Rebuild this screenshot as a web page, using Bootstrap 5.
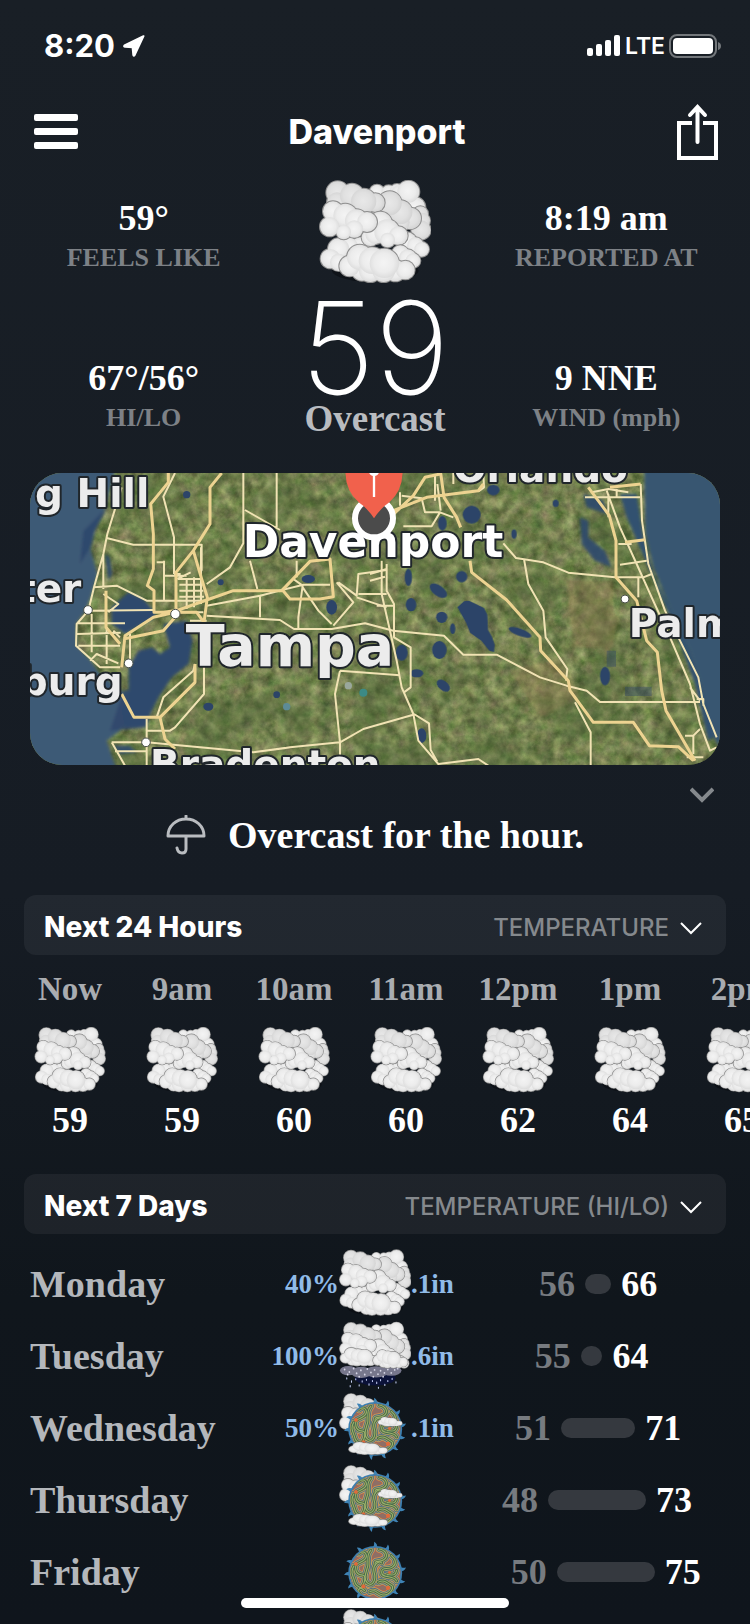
<!DOCTYPE html>
<html lang="en">
<head>
<meta charset="utf-8">
<meta name="viewport" content="width=device-width, initial-scale=1">
<title>Davenport weather</title>
<link rel="stylesheet" href="https://cdn.jsdelivr.net/npm/bootstrap@5.3.0/dist/css/bootstrap.min.css">
<style>
  :root { --ui: Inter, "Liberation Sans", sans-serif; --text: Palatino, "Liberation Serif", serif; }
  body { background: linear-gradient(#191f26, #161c24 55%, #10161c 80%, #0f151c); color: #fff; font-family: var(--text); font-weight: 700; }
  svg { display: block; }
  .screen { height: 100vh; overflow: hidden; }
  .statusbar { height: 88px; padding: 3px 28px 0 44px; font: 700 31px/36px var(--ui); }
  .lte { font-size: 23px; font-weight: 600; }
  .titlebar { height: 88px; padding: 0 32px; }
  .titlebar h1 { font: 800 34px/40px var(--ui); }
  .plain { background: none; border: 0; padding: 0; color: inherit; }
  .current { padding: 0 28px; }
  .side { padding-top: 21px; gap: 80px; }
  .value { font-size: 36px; line-height: 42px; }
  .caption { font-size: 26px; line-height: 38px; color: #7d8186; }
  .bigtemp { font: 200 128px/104px var(--ui); margin-top: 12px; }
  .summary { font-size: 37px; line-height: 38px; color: #b9bcc0; }
  .map { margin: 35px 30px 0; border-radius: 32px; overflow: hidden; }
  .map text { font: 700 117px "DejaVu Sans", sans-serif; fill: #ececec; stroke: #20262b; stroke-width: 12px; paint-order: stroke; stroke-linejoin: round; }
  .map .here { font-size: 132px; fill: #fff; }
  .map .city { font-size: 171px; }
  .more { height: 28px; margin: 16px 36px 6px; }
  .hourly-note { font-size: 38px; line-height: 40px; gap: 22px; margin-bottom: 40px; }
  .panel { height: 60px; margin: 0 24px; padding: 3px 24px 0 20px; border-radius: 12px; background: rgba(255,255,255,.055); }
  .panel h2 { font: 800 28px/32px var(--ui); }
  .panel button { font: 500 24px/32px var(--ui); color: #85898d; gap: 11px; padding-top: 2px; }
  .hours { margin: 14px 0 32px; padding: 0 0 0 14px; overflow: hidden; }
  .hours li { flex: 0 0 112px; }
  .hour { font-size: 33px; line-height: 40px; color: #a9acb0; margin-bottom: 18px; }
  .temp { font-size: 36px; line-height: 44px; margin-top: 5px; }
  .days { margin: 13px 30px 0; padding: 0; }
  .day { display: grid; grid-template-columns: 1fr 72px 1fr; height: 72px; align-items: center; }
  .day > div { padding-top: 2px; }
  .dayname { font-size: 38px; line-height: 44px; color: #b4b7bb; }
  .precip { font-size: 27px; line-height: 36px; color: #90bbe8; }
  .amount { flex: 0 0 91px; }
  .range { font-size: 36px; line-height: 44px; gap: 10px; }
  .range > * { flex-shrink: 0; }
  .lo { color: #777b80; }
  .bar { height: 20px; border-radius: 10px; background: #35393f; }
  .home { position: fixed; left: 50%; bottom: 16px; width: 268px; height: 10px; margin-left: -134px; border-radius: 5px; background: #fff; }
</style>
</head>
<body>

<svg width="0" height="0" class="position-absolute" aria-hidden="true">
  <defs>
    <radialGradient id="puff" cx=".48" cy=".48" r=".55"><stop offset="0" stop-color="#f4f4f4"/><stop offset=".6" stop-color="#ececec"/><stop offset="1" stop-color="#dadada"/></radialGradient>
    <radialGradient id="puffBack" cx=".48" cy=".48" r=".55"><stop offset="0" stop-color="#e8e8e8"/><stop offset=".6" stop-color="#e0e0e0"/><stop offset="1" stop-color="#d2d2d2"/></radialGradient>
    <g id="k1"><circle cx="230" cy="64" r="22"/><circle cx="265" cy="66" r="22"/><circle cx="290" cy="62" r="22"/><circle cx="345" cy="110" r="30"/><circle cx="300" cy="72" r="30"/><circle cx="324" cy="63" r="33"/></g>
    <g id="k2"><circle cx="360" cy="130" r="23"/><circle cx="365" cy="150" r="24"/><circle cx="362" cy="178" r="29"/></g>
    <g id="k3"><circle cx="112" cy="66" r="34"/><circle cx="110" cy="95" r="30"/><circle cx="155" cy="75" r="36"/><circle cx="225" cy="96" r="28"/><circle cx="190" cy="92" r="38"/></g>
    <g id="k4"><circle cx="250" cy="120" r="34"/><circle cx="330" cy="143" r="32"/><circle cx="300" cy="155" r="28"/><circle cx="300" cy="125" r="36"/><circle cx="268" cy="98" r="36"/></g>
    <g id="k5"><circle cx="320" cy="215" r="30"/><circle cx="345" cy="225" r="25"/><circle cx="364" cy="236" r="22"/></g>
    <g id="k6"><circle cx="180" cy="230" r="30"/><circle cx="145" cy="228" r="28"/><circle cx="115" cy="235" r="32"/><circle cx="90" cy="264" r="29"/><circle cx="115" cy="275" r="26"/></g>
    <g id="k7"><circle cx="210" cy="200" r="26"/><circle cx="240" cy="158" r="35"/><circle cx="225" cy="190" r="30"/><circle cx="260" cy="184" r="38"/><circle cx="294" cy="195" r="28"/><circle cx="262" cy="208" r="22"/></g>
    <g id="k8"><circle cx="98" cy="122" r="30"/><circle cx="135" cy="135" r="36"/><circle cx="88" cy="168" r="29"/><circle cx="168" cy="150" r="34"/><circle cx="200" cy="154" r="30"/><circle cx="162" cy="175" r="26"/><circle cx="130" cy="184" r="22"/></g>
    <g id="k9"><circle cx="300" cy="250" r="26"/><circle cx="322" cy="262" r="26"/><circle cx="338" cy="270" r="22"/></g>
    <g id="k10"><circle cx="185" cy="298" r="32"/><circle cx="148" cy="286" r="31"/><circle cx="178" cy="260" r="38"/><circle cx="285" cy="300" r="32"/><circle cx="315" cy="298" r="28"/><circle cx="210" cy="300" r="34"/><circle cx="250" cy="300" r="34"/><circle cx="215" cy="270" r="40"/><circle cx="252" cy="278" r="44"/></g>

    <g id="cloudTop">
      <g stroke="#8e8e8e" stroke-width="6"><use href="#k1"/></g><use href="#k1" fill="url(#puff)"/>
      <g stroke="#8e8e8e" stroke-width="6"><use href="#k2"/></g><use href="#k2" fill="url(#puffBack)"/>
      <g stroke="#8e8e8e" stroke-width="6"><use href="#k4"/></g><use href="#k4" fill="url(#puffBack)"/>
      <g stroke="#8e8e8e" stroke-width="6"><use href="#k3"/></g><use href="#k3" fill="url(#puffBack)"/>
    </g>

    <symbol id="overcast" viewBox="56 28 336 312">
      <ellipse cx="225" cy="300" rx="130" ry="34" fill="#05080b" opacity=".5"/>
      <use href="#cloudTop"/>
      <g stroke="#8e8e8e" stroke-width="6"><use href="#k5"/></g><use href="#k5" fill="url(#puff)"/>
      <g stroke="#8e8e8e" stroke-width="6"><use href="#k6"/></g><use href="#k6" fill="url(#puff)"/>
      <g stroke="#8e8e8e" stroke-width="6"><use href="#k7"/></g><use href="#k7" fill="url(#puff)"/>
      <g stroke="#8e8e8e" stroke-width="6"><use href="#k8"/></g><use href="#k8" fill="url(#puff)"/>
      <g stroke="#8e8e8e" stroke-width="6"><use href="#k9"/></g><use href="#k9" fill="url(#puff)"/>
      <g stroke="#8e8e8e" stroke-width="6"><use href="#k10"/></g><use href="#k10" fill="url(#puff)"/>
    </symbol>

    <symbol id="rain" viewBox="56 24 336 318">
      <ellipse cx="225" cy="290" rx="95" ry="36" fill="#0b1238"/>
      <g fill="#77778c"><ellipse cx="100" cy="256" rx="40" ry="22"/><ellipse cx="160" cy="264" rx="50" ry="26"/><ellipse cx="230" cy="262" rx="56" ry="26"/><ellipse cx="300" cy="256" rx="48" ry="24"/></g>
      <path fill="none" stroke="#d6d6e6" stroke-width="8" stroke-linecap="round" d="M82 250v1M104 262v1M124 246v1M138 268v1M158 254v1M176 274v1M188 248v1M205 264v1M222 252v1M238 272v1M250 256v1M268 266v1M284 250v1M300 266v1M316 252v1M96 274v1M150 284v1M216 284v1M262 284v1M330 246v1"/>
      <path fill="none" stroke="#c3cdf2" stroke-width="5" stroke-linecap="round" d="M92 290v5M114 304v6M134 294v5M150 322v6M164 304v5M184 296v5M196 318v6M212 302v5M232 310v6M250 298v5M270 320v6M284 302v5M304 292v5M322 308v6M108 326v6M240 334v4"/>
      <use href="#cloudTop"/>
      <g stroke="#8e8e8e" stroke-width="6"><use href="#k7" y="-14"/></g><use href="#k7" y="-14" fill="url(#puff)"/>
      <g stroke="#8e8e8e" stroke-width="6"><use href="#k8" y="-14"/></g><use href="#k8" y="-14" fill="url(#puff)"/>
      <g stroke="#8e8e8e" stroke-width="6"><use href="#k5" x="-4" y="-14"/></g><use href="#k5" x="-4" y="-14" fill="url(#puff)"/>
      <g transform="translate(-20 -20) scale(.84 .76)"><g stroke="#8e8e8e" stroke-width="8"><use href="#k10" x="-20"/></g><use href="#k10" x="-20" fill="url(#puff)"/></g>
      <g transform="translate(130 -10) scale(.72 .76)"><g stroke="#8e8e8e" stroke-width="8"><use href="#k10"/></g><use href="#k10" fill="url(#puff)"/></g>
    </symbol>

    <clipPath id="disc"><circle cx="225" cy="192" r="118"/></clipPath>
    <g id="swirls" fill="none" stroke-linecap="round" stroke-linejoin="round">
      <path d="M150 100c25-20 45 10 25 30s-50 10-40 50 50 0 40 50-50 30-20 60"/>
      <path d="M205 85c-25 25-10 50-15 75s-25 60 0 80 40-20 30-50 20-60 35-45"/>
      <path d="M245 80c30 5 45 35 20 50s-45 0-40 25"/>
      <path d="M300 110c25 20 25 40 5 55s-50-5-50 25 60 10 70 40"/>
      <path d="M240 235c30-15 40 5 60 15s-10 50-40 45-30-30-60-15"/>
      <path d="M125 160c-20 30 0 50 5 75s30 20 45 40"/>
      <path d="M280 200c20 0 40 10 45-20"/>
    </g>
    <g id="sun">
      <g fill="#3f83b5">
        <path id="ray" d="M208 78q14-8 12-32 18 10 14 32z"/>
        <use href="#ray" transform="rotate(26 225 192)"/><use href="#ray" transform="rotate(54 225 192)"/><use href="#ray" transform="rotate(82 225 192)"/><use href="#ray" transform="rotate(108 225 192)"/><use href="#ray" transform="rotate(134 225 192)"/><use href="#ray" transform="rotate(162 225 192)"/><use href="#ray" transform="rotate(188 225 192)"/><use href="#ray" transform="rotate(216 225 192)"/><use href="#ray" transform="rotate(242 225 192)"/><use href="#ray" transform="rotate(268 225 192)"/><use href="#ray" transform="rotate(294 225 192)"/><use href="#ray" transform="rotate(326 225 192)"/>
      </g>
      <circle cx="225" cy="192" r="126" fill="#3c7fb0"/>
      <g clip-path="url(#disc)">
        <rect x="100" y="70" width="250" height="250" fill="#8d6f66"/>
        <use href="#swirls" stroke="#b8604a" stroke-width="42"/>
        <use href="#swirls" stroke="#c4a25e" stroke-width="36"/>
        <use href="#swirls" stroke="#4f6f86" stroke-width="29"/>
        <use href="#swirls" stroke="#b8a860" stroke-width="21"/>
        <use href="#swirls" stroke="#456a4c" stroke-width="14"/>
        <use href="#swirls" stroke="#9cb06a" stroke-width="5"/>
        <g fill="#e06a3a"><circle cx="285" cy="262" r="10"/><circle cx="135" cy="150" r="9"/><circle cx="170" cy="255" r="10"/><circle cx="292" cy="190" r="7"/></g>
      </g>
    </g>
    <symbol id="sunny" viewBox="56 24 336 318"><use href="#sun"/></symbol>
    <symbol id="partly" viewBox="56 24 336 318">
      <g transform="translate(0 -4)"><g stroke="#8e8e8e" stroke-width="6"><use href="#k3"/></g><use href="#k3" fill="url(#puffBack)"/>
      <g stroke="#8e8e8e" stroke-width="6"><use href="#k8"/></g><use href="#k8" fill="url(#puff)"/></g>
      <use href="#sun"/>
      <g transform="translate(180 60) scale(.5 .38)"><g stroke="#777" stroke-width="8"><use href="#k10" y="-20"/></g><use href="#k10" y="-20" fill="url(#puff)"/></g>
      <g transform="translate(8 138) scale(.8 .52)"><g stroke="#777" stroke-width="8"><use href="#k10"/></g><use href="#k10" fill="url(#puff)"/></g>
    </symbol>
  </defs>
</svg>

<div class="screen">
  <header>
    <div class="statusbar d-flex align-items-center justify-content-between">
      <div class="d-flex align-items-center gap-2">
        <span>8:20</span>
        <svg width="22" height="22" viewBox="0 0 22 22" fill="#fff"><path d="M20.500 1.200 1.500 10.500q-1 1 .6 1.200l7.500.6.700 7.600q.4 1.600 1.300.3z" stroke="#fff" stroke-width="2" stroke-linejoin="round"/></svg>
      </div>
      <div class="d-flex align-items-center">
        <svg width="34" height="21" viewBox="0 0 34 21" fill="#fff"><rect y="13" width="6" height="8" rx="2"/><rect x="9" y="9" width="6" height="12" rx="2"/><rect x="18" y="5" width="6" height="16" rx="2"/><rect x="27" width="6" height="21" rx="2"/></svg>
        <span class="lte mx-1">LTE</span>
        <svg width="53" height="24" viewBox="0 0 53 24"><rect x="1" y="1" width="46" height="22" rx="7" fill="none" stroke="#73777b" stroke-width="2"/><rect x="4" y="4" width="40" height="16" rx="4" fill="#fff"/><path d="M49 8q3 1 3 4t-3 4z" fill="#73777b"/></svg>
      </div>
    </div>
    <nav class="titlebar d-flex align-items-center justify-content-between" aria-label="Main">
      <button class="plain" type="button" aria-label="Menu"><svg width="48" height="37" viewBox="0 0 48 37" fill="#fff"><rect x="2" width="44" height="7" rx="2"/><rect x="2" y="14" width="44" height="7" rx="2"/><rect x="2" y="28" width="44" height="7" rx="2"/></svg></button>
      <h1 class="m-0">Davenport</h1>
      <button class="plain" type="button" aria-label="Share"><svg width="44" height="56" viewBox="0 0 44 56" fill="none" stroke="#fff" stroke-width="4"><path d="M18 19H5v35h37V19H29"/><path d="M23.500 38V4M16 11l7.500-8 7.500 8" stroke-linecap="round"/></svg></button>
    </nav>
  </header>

  <main>
    <section class="current row g-0 text-center" aria-label="Current conditions">
      <div class="side col-4 d-flex flex-column">
        <div><div class="value">59°</div><div class="caption">FEELS LIKE</div></div>
        <div><div class="value">67°/56°</div><div class="caption">HI/LO</div></div>
      </div>
      <div class="col-4 pt-1">
        <svg class="mx-auto" width="112" height="104"><use href="#overcast"/></svg>
        <div class="bigtemp">59</div>
        <div class="summary">Overcast</div>
      </div>
      <div class="side col-4 d-flex flex-column">
        <div><div class="value">8:19 am</div><div class="caption">REPORTED AT</div></div>
        <div><div class="value">9 NNE</div><div class="caption">WIND (mph)</div></div>
      </div>
    </section>

    <div class="map">
      <svg width="100%" viewBox="30 27 2070 876" role="img" aria-label="Map around Davenport">
        <defs>
          <filter id="fields" x="0" y="0" width="1" height="1" color-interpolation-filters="sRGB"><feTurbulence type="fractalNoise" baseFrequency=".03" numOctaves="5" seed="8"/><feColorMatrix values=".7 .3 0 0 -.05  .5 .5 0 0 0  .5 .2 .1 0 -.08  0 0 0 0 1"/></filter>
          <filter id="patches" x="0" y="0" width="1" height="1" color-interpolation-filters="sRGB"><feTurbulence type="fractalNoise" baseFrequency=".006" numOctaves="4" seed="21"/><feColorMatrix values="0 0 0 0 .28  0 0 0 0 .38  0 0 0 0 .2  0 4 0 0 -1.800"/></filter>
          <filter id="soft"><feGaussianBlur stdDeviation="4"/></filter>
        </defs>
        <rect x="30" y="27" width="2070" height="876" fill="#76824c"/>
        <rect x="30" y="27" width="2070" height="876" filter="url(#fields)" opacity=".6"/>
        <rect x="30" y="27" width="2070" height="876" filter="url(#patches)" opacity=".4"/>
        <g filter="url(#soft)">
          <path fill="#a57d57" opacity=".28" d="M1640 350h140v200h-120zM1470 620l150-40 60 120-120 60zM1720 400l80 60-40 130z"/>
          <path fill="#3d5a76" d="M0 0H290L258 120 225 200 212 255 232 330 212 400 196 440 168 480 170 545 212 590 240 630 305 680 330 760 300 800 260 830 285 903 300 930H0Z"/>
          <path fill="#2f486d" d="M262 130 225 200 212 250 180 300 190 200zM275 430l50-45 45 20 35 40 0 15-90 50-40-30zM430 480l70-10 18 60-12 70-50 40-40 60-30 60-20 30h-50l-10-50 20-60 0-70 30-50 40-10 24 20 30-20z"/>
          <path fill="#2f486d" opacity=".9" d="M310 680l80-10 10 40-20 80-110 10zM255 270l14 10 8 50-12 20zM280 845l50 0 20 20-50 5zM1690 90l60 20 10 40-60-20zM1680 160l25 10 0 50 50 40 20 50-50-20-40-50z"/>
          <path fill="#395671" d="M1872 0 1876 210 1900 310 1950 430 2010 560 2050 680 2070 800 2110 870 2140 900V0Z"/>
          <path fill="#31516f" d="M1800 90h50l20 130 30 110 60 120 50 110 40 120 30 140-15 10-40-170-70-190-65-150-70-160z"/>
        </g>
        <g fill="#2c4468">
          <circle cx="1355" cy="152" r="27"/><ellipse cx="1267" cy="178" rx="13" ry="22"/><circle cx="1325" cy="338" r="17"/><ellipse cx="1165" cy="340" rx="11" ry="26"/><ellipse cx="1255" cy="380" rx="30" ry="16" transform="rotate(35 1255 380)"/><ellipse cx="1173" cy="422" rx="16" ry="20"/><circle cx="1265" cy="460" r="17"/><ellipse cx="1298" cy="494" rx="8" ry="16"/>
          <path d="M1312 430l20-18 15-2 25 12 20 10 10 20 2 46 12 20 8 24-2 22-14-4-24-30-34-24-12-30z"/><ellipse cx="1258" cy="558" rx="22" ry="27"/><ellipse cx="1190" cy="628" rx="20" ry="12"/><ellipse cx="1270" cy="665" rx="23" ry="14" transform="rotate(40 1270 665)"/><ellipse cx="1500" cy="505" rx="36" ry="11" transform="rotate(20 1500 505)"/><ellipse cx="1145" cy="566" rx="18" ry="24"/><ellipse cx="1755" cy="636" rx="15" ry="28"/><ellipse cx="1420" cy="78" rx="19" ry="16"/><ellipse cx="1482" cy="210" rx="8" ry="14"/><ellipse cx="1607" cy="118" rx="9" ry="11"/><path d="M1760 560h28v48h-28zM1815 668h80v28h-80z" opacity=".4"/>
          <circle cx="500" cy="92" r="11"/><circle cx="602" cy="355" r="9"/><ellipse cx="565" cy="728" rx="15" ry="12"/><ellipse cx="865" cy="345" rx="20" ry="12"/><ellipse cx="935" cy="430" rx="16" ry="22"/><circle cx="770" cy="692" r="10"/><circle cx="800" cy="728" r="11" fill="#5d8b96"/><circle cx="1030" cy="686" r="12" fill="#3c8a86"/><circle cx="985" cy="665" r="11" fill="#9aa79c"/><ellipse cx="1205" cy="815" rx="14" ry="22"/>
        </g>
        <g fill="none" stroke="#f1e3b4" stroke-width="6" stroke-linejoin="round">
          <path d="M465 27 430 98 462 220V330M305 70 262 210 250 270 222 370 205 440 170 480 168 545 240 610H300M260 222l80 20H545V320M670 27V238L630 310 560 360M770 27V190M675 138l105 60M830 290v50M690 290l22 85M250 270V375M222 370 290 365 380 410H560M250 390l45 30-30 25M205 440 400 438M170 478H315M172 510l130-4M175 545H300M215 450V565M260 490V600M210 590l20-20 65 28M432 290V410M432 335H500M410 295h22M462 330h20M478 345h65M478 362h70M478 380h72M478 398h74M500 345v90M522 340v90M543 250v170M512 325l-40 20M430 445h120M510 470h50M330 510V600M280 500l20 20M552 600V690L465 790 450 800H380M525 600 520 620 430 700 410 760M380 765V903M275 835H380L700 865 810 850 960 835 1030 795 1180 752M275 835l40 70M285 862H380M720 395V460M560 425 720 395 850 362H930M560 455 780 468 822 495H935L1035 478 1120 500 1272 515 1330 572H1430L1560 640 1640 665 1700 680 1740 714H2040M835 495V460L848 365 820 345M848 370 895 440 935 480M950 355l50 60-60 70M955 355 1010 395 1015 330 1100 318M1015 390H1100M1010 400l90 30M960 620 945 690 960 835V890M960 620 1140 634"/>
          <path d="M1085 290v100l25 110 20 90 15 80 35 80 15 80 60 70 120-15 45 30M1100 300v80l22 40v100l50 30v120l-20 15M1182 750l45 28 5 80 20 35M1050 330l50-15M1050 350l45-12M1070 425h50M1140 85v40M1145 95l60 8 10 42h45L1235 187H1150M1260 145l40 15M1245 30V110M1252 60l10 80M1300 60V27M1390 27 1392 70 1375 82M1450 238 1488 282 1570 295 1645 326 1785 340H1870L1895 330M1512 285 1525 360 1570 440 1577 520 1642 615 1638 650M1715 85l50-10 60 10M1695 100H1860M1760 80 1800 190 1850 300 1895 400 1950 520 2010 660 2040 780 2070 860 2090 850M1862 60 1866 170 1885 300 1935 440 1990 550 2035 640 2050 720 2090 820M1795 240h40M1800 302l80-12M1765 90v70M1790 75v25M1855 340v60M1665 715 1712 805V903M1995 815h25V870M2020 815l20-20M2000 880h50M2010 670l30 40M2030 705h20v20"/>
        </g>
        <g fill="none" stroke="#edd391" stroke-width="9" stroke-linejoin="round">
          <path d="M445 27V55L410 98 392 120 400 210V315L382 365 402 380V445H430L465 440M605 27 570 70V180L520 260 468 325V450M520 260 545 345 562 400 552 475 530 445H470M465 445 400 460 315 515 305 610M465 460 430 500 310 525M258 380V490L300 540M470 440 560 408 640 380H785L870 292 930 285 940 398 900 405H810L785 375M305 690 342 760H420L435 825 465 855M420 760 525 655V600"/>
          <path d="M1110 160 1180 95 1215 40 1260 30M1120 140 1220 100 1375 80 1390 60M1262 27 1272 100 1310 160 1322 190M1350 290 1355 325 1460 408 1560 520 1562 560 1645 650 1650 680 1720 775H1840L1888 845 1975 848 2020 890M1705 70 1768 155 1788 230V340L1850 410 1880 530 1912 565 1925 680 1938 740 2025 890M1770 70 1862 60M1815 235l60-8"/>
        </g>
        <g fill="#fff" stroke="#4a4f48" stroke-width="3"><circle cx="204" cy="438" r="13"/><circle cx="466" cy="450" r="14"/><circle cx="326" cy="598" r="13"/><circle cx="378" cy="835" r="13"/><circle cx="1815" cy="405" r="12"/></g>
        <text x="388" y="128" text-anchor="end">g Hill</text>
        <text x="184" y="413" text-anchor="end">ter</text>
        <text x="308" y="692" text-anchor="end">burg</text>
        <text class="city" x="497" y="607">Tampa</text>
        <text x="390" y="943">Bradenton</text>
        <text x="1300" y="55">Orlando</text>
        <text x="1826" y="520">Palm</text>
        <text class="here" x="668" y="280">Davenport</text>
        <circle cx="1062" cy="163" r="57" fill="#4b4b4b" stroke="#fff" stroke-width="18"/>
        <path d="M976 20q0 60 40 95 26 18 46 48 20-30 46-48 40-35 40-95z" fill="#f1614c"/>
        <path d="M1062 27v72" stroke="#fff" stroke-width="7"/><circle cx="1062" cy="20" r="16" fill="#fff"/>
      </svg>
    </div>

    <div class="more d-flex justify-content-end align-items-center">
      <button class="plain" type="button" aria-label="Show more"><svg width="24" height="16" viewBox="0 0 24 16" fill="none" stroke="#85898d" stroke-width="4"><path d="M1 2l11 11L23 2"/></svg></button>
    </div>
    <p class="hourly-note d-flex justify-content-center align-items-center">
      <svg width="40" height="40" viewBox="0 0 40 40" fill="none" stroke="#b9bcc0" stroke-width="3" stroke-linecap="round" stroke-linejoin="round"><path d="M20 1v3M2 21C2 11 10 4 20 4s18 7 18 17zM20 21v13q0 4-4 4t-5-5"/></svg>
      <span>Overcast for the hour.</span>
    </p>

    <section>
      <div class="panel d-flex align-items-center justify-content-between">
        <h2 class="m-0">Next 24 Hours</h2>
        <button class="plain d-flex align-items-center" type="button">TEMPERATURE <svg width="22" height="14" viewBox="0 0 22 14" fill="none" stroke="#fff" stroke-width="2"><path d="M1 2l10 10L21 2"/></svg></button>
      </div>
      <ul class="hours d-flex list-unstyled text-center">
        <li><div class="hour">Now</div><svg class="mx-auto" width="72" height="66"><use href="#overcast"/></svg><div class="temp">59</div></li>
        <li><div class="hour">9am</div><svg class="mx-auto" width="72" height="66"><use href="#overcast"/></svg><div class="temp">59</div></li>
        <li><div class="hour">10am</div><svg class="mx-auto" width="72" height="66"><use href="#overcast"/></svg><div class="temp">60</div></li>
        <li><div class="hour">11am</div><svg class="mx-auto" width="72" height="66"><use href="#overcast"/></svg><div class="temp">60</div></li>
        <li><div class="hour">12pm</div><svg class="mx-auto" width="72" height="66"><use href="#overcast"/></svg><div class="temp">62</div></li>
        <li><div class="hour">1pm</div><svg class="mx-auto" width="72" height="66"><use href="#overcast"/></svg><div class="temp">64</div></li>
        <li><div class="hour">2pm</div><svg class="mx-auto" width="72" height="66"><use href="#overcast"/></svg><div class="temp">65</div></li>
      </ul>
    </section>

    <section>
      <div class="panel d-flex align-items-center justify-content-between">
        <h2 class="m-0">Next 7 Days</h2>
        <button class="plain d-flex align-items-center" type="button">TEMPERATURE (HI/LO) <svg width="22" height="14" viewBox="0 0 22 14" fill="none" stroke="#fff" stroke-width="2"><path d="M1 2l10 10L21 2"/></svg></button>
      </div>
      <ul class="days list-unstyled">
        <li class="day">
          <div class="d-flex align-items-center justify-content-between"><span class="dayname">Monday</span><span class="precip">40%</span></div>
          <svg width="72" height="68"><use href="#overcast"/></svg>
          <div class="d-flex align-items-center"><span class="precip amount">.1in</span>
            <div class="range flex-fill d-flex align-items-center"><span class="lo" style="margin-left:17%">56</span><span class="bar" style="width:12%"></span><span>66</span></div></div>
        </li>
        <li class="day">
          <div class="d-flex align-items-center justify-content-between"><span class="dayname">Tuesday</span><span class="precip">100%</span></div>
          <svg width="72" height="68"><use href="#rain"/></svg>
          <div class="d-flex align-items-center"><span class="precip amount">.6in</span>
            <div class="range flex-fill d-flex align-items-center"><span class="lo" style="margin-left:15%">55</span><span class="bar" style="width:10%"></span><span>64</span></div></div>
        </li>
        <li class="day">
          <div class="d-flex align-items-center justify-content-between"><span class="dayname">Wednesday</span><span class="precip">50%</span></div>
          <svg width="72" height="68"><use href="#partly"/></svg>
          <div class="d-flex align-items-center"><span class="precip amount">.1in</span>
            <div class="range flex-fill d-flex align-items-center"><span class="lo" style="margin-left:6%">51</span><span class="bar" style="width:34%"></span><span>71</span></div></div>
        </li>
        <li class="day">
          <div><span class="dayname">Thursday</span></div>
          <svg width="72" height="68"><use href="#partly"/></svg>
          <div class="d-flex align-items-center"><span class="amount"></span>
            <div class="range flex-fill d-flex align-items-center"><span class="lo" style="margin-left:0%">48</span><span class="bar" style="width:45%"></span><span>73</span></div></div>
        </li>
        <li class="day">
          <div><span class="dayname">Friday</span></div>
          <svg width="72" height="68"><use href="#sunny"/></svg>
          <div class="d-flex align-items-center"><span class="amount"></span>
            <div class="range flex-fill d-flex align-items-center"><span class="lo" style="margin-left:4%">50</span><span class="bar" style="width:45%"></span><span>75</span></div></div>
        </li>
        <li class="day">
          <div></div>
          <svg width="72" height="68"><use href="#partly"/></svg>
          <div></div>
        </li>
      </ul>
    </section>
  </main>
  <div class="home" aria-hidden="true"></div>
</div>
<script src="https://cdn.jsdelivr.net/npm/bootstrap@5.3.0/dist/js/bootstrap.bundle.min.js"></script>
</body>
</html>
